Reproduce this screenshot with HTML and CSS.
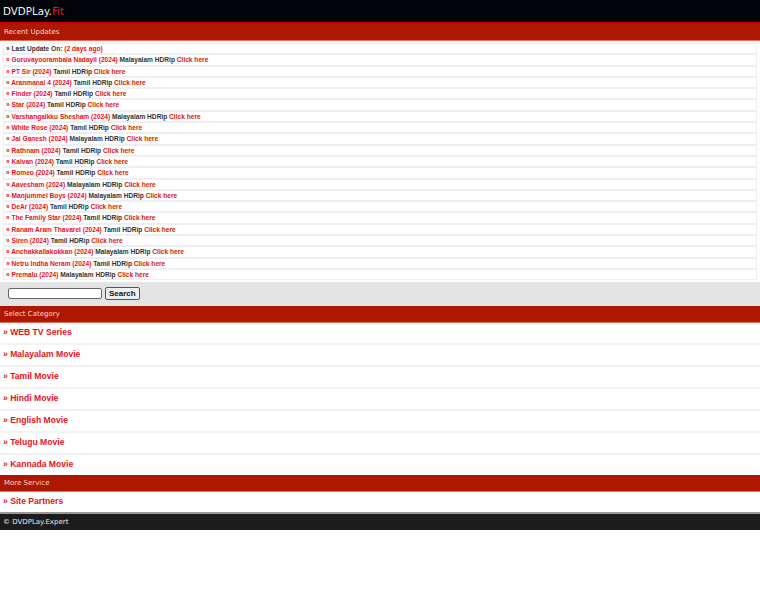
FILE: index.html
```html
<!DOCTYPE html>
<html lang="en">
<head>
  <meta charset="UTF-8">
  <meta name="viewport" content="width=device-width, initial-scale=1.0">
  <title>DVDPLay</title>
  <link rel="stylesheet" href="styles.css">
</head>
<body>
  <div class="logo">DVDPLay.<span>Fit</span></div>

  <div class="head">Recent Updates</div>
  <div class="updates">
    <div class="row">&raquo; Last Update On: <span class="red">(2 days ago)</span></div>
    <div class="row"><a>&raquo; Guruvayoorambala Nadayil (2024)</a> Malayalam HDRip <a class="dl">Click here</a></div>
    <div class="row"><a>&raquo; PT Sir (2024)</a> Tamil HDRip <a class="dl">Click here</a></div>
    <div class="row"><a>&raquo; Aranmanai 4 (2024)</a> Tamil HDRip <a class="dl">Click here</a></div>
    <div class="row"><a>&raquo; Finder (2024)</a> Tamil HDRip <a class="dl">Click here</a></div>
    <div class="row"><a>&raquo; Star (2024)</a> Tamil HDRip <a class="dl">Click here</a></div>
    <div class="row"><a>&raquo; Varshangalkku Shesham (2024)</a> Malayalam HDRip <a class="dl">Click here</a></div>
    <div class="row"><a>&raquo; White Rose (2024)</a> Tamil HDRip <a class="dl">Click here</a></div>
    <div class="row"><a>&raquo; Jai Ganesh (2024)</a> Malayalam HDRip <a class="dl">Click here</a></div>
    <div class="row"><a>&raquo; Rathnam (2024)</a> Tamil HDRip <a class="dl">Click here</a></div>
    <div class="row"><a>&raquo; Kalvan (2024)</a> Tamil HDRip <a class="dl">Click here</a></div>
    <div class="row"><a>&raquo; Romeo (2024)</a> Tamil HDRip <a class="dl">Click here</a></div>
    <div class="row"><a>&raquo; Aavesham (2024)</a> Malayalam HDRip <a class="dl">Click here</a></div>
    <div class="row"><a>&raquo; Manjummel Boys (2024)</a> Malayalam HDRip <a class="dl">Click here</a></div>
    <div class="row"><a>&raquo; DeAr (2024)</a> Tamil HDRip <a class="dl">Click here</a></div>
    <div class="row"><a>&raquo; The Family Star (2024)</a> Tamil HDRip <a class="dl">Click here</a></div>
    <div class="row"><a>&raquo; Ranam Aram Thavarel (2024)</a> Tamil HDRip <a class="dl">Click here</a></div>
    <div class="row"><a>&raquo; Siren (2024)</a> Tamil HDRip <a class="dl">Click here</a></div>
    <div class="row"><a>&raquo; Anchakkallakokkan (2024)</a> Malayalam HDRip <a class="dl">Click here</a></div>
    <div class="row"><a>&raquo; Netru Indha Neram (2024)</a> Tamil HDRip <a class="dl">Click here</a></div>
    <div class="row"><a>&raquo; Premalu (2024)</a> Malayalam HDRip <a class="dl">Click here</a></div>
  </div>

  <form class="search">
    <input type="text" name="q">
    <button type="submit">Search</button>
  </form>

  <div class="head">Select Category</div>
  <div class="cat"><a>&raquo; WEB TV Series</a></div>
  <div class="cat"><a>&raquo; Malayalam Movie</a></div>
  <div class="cat"><a>&raquo; Tamil Movie</a></div>
  <div class="cat"><a>&raquo; Hindi Movie</a></div>
  <div class="cat"><a>&raquo; English Movie</a></div>
  <div class="cat"><a>&raquo; Telugu Movie</a></div>
  <div class="cat last"><a>&raquo; Kannada Movie</a></div>

  <div class="head">More Service</div>
  <div class="cat last"><a>&raquo; Site Partners</a></div>

  <div class="foot">&copy; DVDPLay.Expert</div>
</body>
</html>
```

FILE: styles.css
```css
body {
  margin: 0;
  background: #fff;
  font-family: "DejaVu Sans", Verdana, sans-serif;
}

.logo {
  background: #03040a;
  color: #f2f2f2;
  font-size: 10.3px;
  height: 22px;
  line-height: 22px;
  padding-left: 3px;
  border-bottom: 2px solid #d40000;
}

.logo span {
  color: #e8201a;
}

.head {
  background: #ae1700;
  color: #f4d8d0;
  font-size: 7px;
  height: 16px;
  line-height: 16px;
  padding-left: 4px;
  border-bottom: 1px solid #e8705a;
}

.updates {
  padding: 2px 3px 2px 3px;
}

.row {
  font-family: "Liberation Sans", Arial, sans-serif;
  font-size: 6.6px;
  font-weight: bold;
  color: #333;
  line-height: 9.3px;
  padding-left: 2px;
  border: 1px solid #eeeff4;
}

.row a {
  color: #e8101a;
}

.row .dl {
  color: #d42000;
}

.red {
  color: #e8101a;
}

.search {
  background: #e4e4e4;
  margin: 0;
  padding: 5px 7px 6px 8px;
  display: flex;
  gap: 3px;
  align-items: center;
}

.search input {
  width: 90px;
  height: 9px;
  padding: 0 1px;
  border: 1px solid #666;
  border-radius: 2px;
  background: #fff;
}

.search button {
  font-family: "Liberation Sans", Arial, sans-serif;
  font-size: 8px;
  font-weight: bold;
  height: 13px;
  padding: 0 3px;
  border: 1px solid #555;
  border-radius: 2px;
  background: #eee;
  color: #111;
}

.cat {
  font-family: "Liberation Sans", Arial, sans-serif;
  font-size: 8.6px;
  font-weight: bold;
  height: 20px;
  line-height: 19px;
  padding-left: 3px;
  border-bottom: 2px solid #f2f2f2;
}

.cat a {
  color: #e8101a;
}

.cat.last {
  border-bottom: none;
}

.foot {
  background: #1c1c1c;
  color: #e8e8e8;
  font-size: 7px;
  height: 16px;
  line-height: 16px;
  padding-left: 3px;
  border-top: 2px solid #999;
}
```
